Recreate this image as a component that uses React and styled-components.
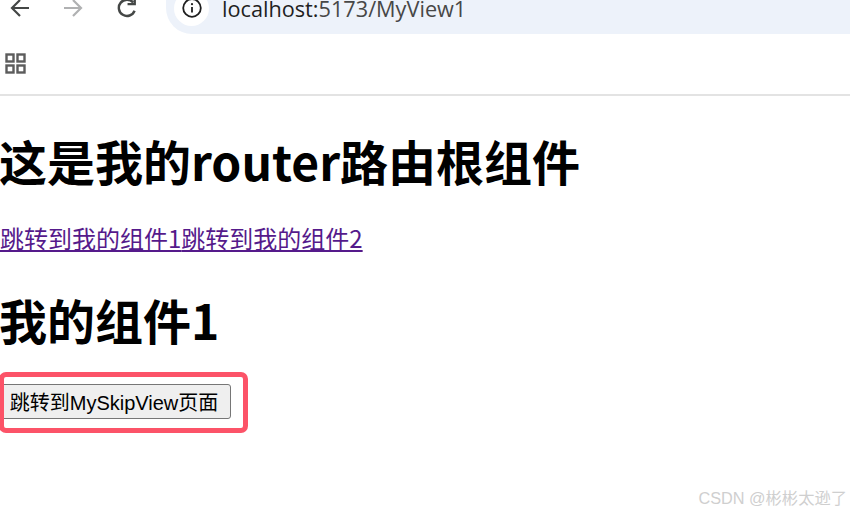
import React from "react";
import styled, { createGlobalStyle } from "styled-components";

const GlobalStyle = createGlobalStyle`
  html, body {
    margin: 0;
    padding: 0;
    background: #fff;
    overflow: hidden;
  }
  body {
    font-family: "Noto Sans CJK SC", "Liberation Sans", sans-serif;
  }
`;

const Page = styled.div`
  position: relative;
  width: 850px;
  height: 513px;
  overflow: hidden;
`;

const Toolbar = styled.div`
  display: flex;
  align-items: center;
  height: 34px;
  overflow: hidden;
`;

const NavButton = styled.div`
  flex: none;
  width: ${(p) => p.$w}px;
  height: 34px;
  margin-top: -18px;
  display: flex;
  align-items: center;
  justify-content: center;
`;

const Omnibox = styled.div`
  flex: 1;
  height: 68px;
  margin-top: -34px;
  margin-left: 19px;
  padding-left: 8px;
  display: flex;
  align-items: center;
  gap: 13px;
  background: #edf2fa;
  border-radius: 26px 0 0 26px;
`;

const InfoBadge = styled.div`
  flex: none;
  width: 35px;
  height: 35px;
  margin-top: 16px;
  border-radius: 50%;
  background: #fff;
  display: flex;
  align-items: center;
  justify-content: center;
`;

const Url = styled.div`
  font-family: "Open Sans", sans-serif;
  font-size: 21.7px;
  line-height: 28px;
  color: #474747;
  margin-top: 18px;
  white-space: nowrap;

  b {
    font-weight: 400;
    color: #1f1f1f;
  }
`;

const Bookmarks = styled.div`
  height: 60px;
  padding-left: 5px;
  display: flex;
  align-items: center;
  border-bottom: 2px solid #e3e3e3;
`;

const Content = styled.main`
  padding-top: 32px;
`;

const Heading = styled.h1`
  margin: 0 0 0 -1px;
  font-size: 48px;
  line-height: 64px;
  font-weight: 700;
  color: #000;
`;

const LinkRow = styled.p`
  margin: 30px 0 33px;
  font-size: 24px;
  line-height: 32px;
`;

const RouteLink = styled.a`
  color: #551a8b;
  text-decoration: underline;
`;

const SkipButton = styled.button`
  display: block;
  margin: 33px 0 0 -3px;
  width: 234px;
  height: 35px;
  padding: 0;
  font-family: "Liberation Sans", "Noto Sans CJK SC", sans-serif;
  font-size: 20px;
  color: #000;
  background: #efefef;
  border: 1px solid #767676;
  border-radius: 3px;
`;

const Highlight = styled.div`
  position: absolute;
  left: -1px;
  top: 372px;
  width: 249px;
  height: 61px;
  box-sizing: border-box;
  border: 5px solid #fc5368;
  border-radius: 7px;
`;

const Watermark = styled.div`
  position: absolute;
  right: 3px;
  bottom: 5px;
  font-family: "Liberation Sans", "Noto Sans CJK SC", sans-serif;
  font-size: 16.3px;
  line-height: 20px;
  color: #cfcfcf;
  white-space: nowrap;
`;

const BackIcon = () => (
  <svg width="20" height="20" viewBox="0 0 20 20" fill="none" stroke="#444746" strokeWidth="2.2">
    <path d="M19 10H2M10 2l-8 8 8 8" />
  </svg>
);

const ForwardIcon = () => (
  <svg width="20" height="20" viewBox="0 0 20 20" fill="none" stroke="#b0b1b2" strokeWidth="2.2">
    <path d="M1 10h17M10 2l8 8-8 8" />
  </svg>
);

const ReloadIcon = () => (
  <svg width="22" height="22" viewBox="0 0 20 20" fill="none" stroke="#444746" strokeWidth="2.2">
    <path d="M16.9 12.5A7.4 7.4 0 1 1 15.6 5" />
    <path d="M17 0V6.5H10.5" />
  </svg>
);

const InfoIcon = () => (
  <svg width="20" height="20" viewBox="0 0 20 20" fill="none">
    <circle cx="10" cy="10" r="8.8" stroke="#1f1f1f" strokeWidth="1.8" />
    <path d="M10 9v5.5" stroke="#1f1f1f" strokeWidth="1.8" />
    <circle cx="10" cy="6.2" r="1.1" fill="#1f1f1f" />
  </svg>
);

const AppsIcon = () => (
  <svg width="22" height="22" viewBox="0 0 22 22" fill="none" stroke="#5c5c5c" strokeWidth="2.4">
    <rect x="1.5" y="1.5" width="7" height="7" />
    <rect x="12.5" y="1.5" width="7" height="7" />
    <rect x="1.5" y="12.5" width="7" height="7" />
    <rect x="12.5" y="12.5" width="7" height="7" />
  </svg>
);

export default function App() {
  return (
    <Page>
      <GlobalStyle />
      <Toolbar>
        <NavButton $w={39}>
          <BackIcon />
        </NavButton>
        <NavButton $w={68}>
          <ForwardIcon />
        </NavButton>
        <NavButton $w={40}>
          <ReloadIcon />
        </NavButton>
        <Omnibox>
          <InfoBadge>
            <InfoIcon />
          </InfoBadge>
          <Url>
            <b>localhost:</b>5173/MyView1
          </Url>
        </Omnibox>
      </Toolbar>
      <Bookmarks>
        <AppsIcon />
      </Bookmarks>
      <Content>
        <Heading>这是我的router路由根组件</Heading>
        <LinkRow>
          <RouteLink href="#/MyView1">跳转到我的组件1</RouteLink>
          <RouteLink href="#/MyView2">跳转到我的组件2</RouteLink>
        </LinkRow>
        <Heading>我的组件1</Heading>
        <SkipButton>跳转到MySkipView页面</SkipButton>
      </Content>
      <Highlight />
      <Watermark>CSDN @彬彬太逊了</Watermark>
    </Page>
  );
}
